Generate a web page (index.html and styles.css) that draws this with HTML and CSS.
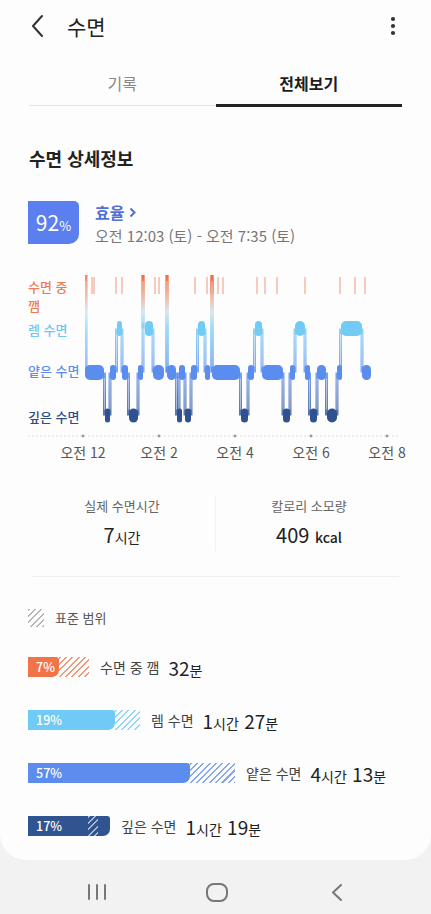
FILE: index.html
```html
<!DOCTYPE html>
<html lang="ko">
<head>
  <meta charset="UTF-8" />
  <title>수면</title>
  <meta name="viewport" content="width=device-width, initial-scale=1.0"/>
  <link rel="stylesheet" href="styles.css">
</head>
<body>
  <div class="card">
    <header class="appbar">
      <svg class="icon-back" width="13" height="24" viewBox="0 0 13 24"><polyline points="11,2 2,12 11,22" /></svg>
      <h1 class="title">수면</h1>
      <svg class="icon-more" width="6" height="20" viewBox="0 0 6 20"><circle cx="3" cy="3" r="2.1"/><circle cx="3" cy="10" r="2.1"/><circle cx="3" cy="17" r="2.1"/></svg>
    </header>

    <nav class="tabs">
      <div class="tab">기록</div>
      <div class="tab active">전체보기</div>
    </nav>

    <section class="detail">
      <h2 class="section-title">수면 상세정보</h2>

      <div class="efficiency">
        <div class="eff-badge"><span class="eff-num">92</span><span class="eff-pct">%</span></div>
        <div class="eff-info">
          <div class="eff-link">효율 <svg width="7" height="11" viewBox="0 0 7 11"><polyline points="1.5,1.5 5.5,5.5 1.5,9.5" /></svg></div>
          <div class="eff-time">오전 12:03 (토) - 오전 7:35 (토)</div>
        </div>
      </div>

      <div class="chart">
        <div class="plot">
          <div class="stage-labels">
            <span class="lbl lbl-wake">수면 중<br>깸</span>
            <span class="lbl lbl-rem">렘 수면</span>
            <span class="lbl lbl-light">얕은 수면</span>
            <span class="lbl lbl-deep">깊은 수면</span>
          </div>
          <svg id="hypnogram" class="hypno" width="318" height="160" viewBox="0 0 318 160"></svg>
        </div>
        <svg class="axis" width="395" height="32" viewBox="0 0 395 32">
          <line x1="0" y1="3" x2="372" y2="3" class="axis-line" />
          <circle cx="55" cy="3" r="1.4" class="axis-dot" />
          <circle cx="131" cy="3" r="1.4" class="axis-dot" />
          <circle cx="207" cy="3" r="1.4" class="axis-dot" />
          <circle cx="283" cy="3" r="1.4" class="axis-dot" />
          <circle cx="359" cy="3" r="1.4" class="axis-dot" />
          <text x="55" y="25" class="axis-text">오전 12</text>
          <text x="131" y="25" class="axis-text">오전 2</text>
          <text x="207" y="25" class="axis-text">오전 4</text>
          <text x="283" y="25" class="axis-text">오전 6</text>
          <text x="359" y="25" class="axis-text">오전 8</text>
        </svg>
      </div>

      <div class="summary">
        <div class="stat">
          <div class="stat-label">실제 수면시간</div>
          <div class="stat-value">7<small>시간</small></div>
        </div>
        <div class="stat">
          <div class="stat-label">칼로리 소모량</div>
          <div class="stat-value">409 <small class="kcal">kcal</small></div>
        </div>
      </div>
    </section>

    <div class="divider"></div>

    <div class="legend">
      <span class="legend-icon"></span>
      <span>표준 범위</span>
    </div>

    <ul class="stages">
      <li class="stage-row wake">
        <div class="bar" style="width:61px">
          <div class="bar-fill" style="width:31px">7%</div>
          <div class="bar-range" style="left:31px;width:30px"></div>
        </div>
        <span class="stage-label">수면 중 깸</span>
        <span class="stage-value">32<small>분</small></span>
      </li>
      <li class="stage-row rem">
        <div class="bar" style="width:112px">
          <div class="bar-fill" style="width:87px">19%</div>
          <div class="bar-range" style="left:87px;width:25px"></div>
        </div>
        <span class="stage-label">렘 수면</span>
        <span class="stage-value">1<small>시간</small> 27<small>분</small></span>
      </li>
      <li class="stage-row light">
        <div class="bar" style="width:207px">
          <div class="bar-fill" style="width:162px">57%</div>
          <div class="bar-range" style="left:162px;width:45px"></div>
        </div>
        <span class="stage-label">얕은 수면</span>
        <span class="stage-value">4<small>시간</small> 13<small>분</small></span>
      </li>
      <li class="stage-row deep">
        <div class="bar" style="width:82px">
          <div class="bar-fill" style="width:82px">17%</div>
          <div class="bar-range inside" style="left:60px;width:10px"></div>
        </div>
        <span class="stage-label">깊은 수면</span>
        <span class="stage-value">1<small>시간</small> 19<small>분</small></span>
      </li>
    </ul>
  </div>

  <div class="navbar">
    <svg width="20" height="16" viewBox="0 0 20 16"><line x1="2" y1="1" x2="2" y2="15"/><line x1="10" y1="1" x2="10" y2="15"/><line x1="18" y1="1" x2="18" y2="15"/></svg>
    <svg width="22" height="19" viewBox="0 0 22 19"><rect x="1" y="1" width="20" height="17" rx="7"/></svg>
    <svg width="12" height="19" viewBox="0 0 12 19"><polyline points="10,2 2,9.5 10,17"/></svg>
  </div>

  <script>
    const svg = document.getElementById("hypnogram");
    const NS = "http://www.w3.org/2000/svg";

    // level centres and band boxes, in svg coordinates
    const LEVEL = { w: 2, r: 55.5, l: 99.5, d: 142.5 };
    const BAND = { r: [48, 15], l: [92, 15], d: [135.5, 14] };
    const COLOR = { r: "#72cbf4", l: "#5b8def", d: "#2e5190" };

    // [stage, start x, end x]
    const stages = [
      ["w", 1, 1], ["l", 0, 19], ["d", 20, 25], ["l", 25, 31], ["r", 32, 37],
      ["l", 37, 43], ["d", 44, 53], ["l", 53, 57], ["w", 58, 58], ["r", 60, 68],
      ["l", 68, 79], ["w", 82, 82], ["l", 82, 91], ["d", 92, 94], ["l", 94, 100],
      ["d", 100, 106], ["l", 106, 112], ["r", 113, 120], ["l", 120, 124], ["w", 127, 127],
      ["l", 127, 155], ["d", 156, 163], ["l", 163, 169], ["r", 170, 177], ["l", 177, 198],
      ["d", 198, 205], ["l", 205, 210], ["r", 210, 220], ["l", 220, 224], ["d", 225, 232],
      ["l", 232, 241], ["d", 242, 252], ["l", 252, 255], ["r", 256, 277], ["l", 277, 286]
    ];
    const wakeTicks = [7, 9, 31, 37, 70, 74, 110, 122, 126, 128, 133, 138, 172, 180, 192, 220, 255, 270, 280];

    function el(name, attrs) {
      const e = document.createElementNS(NS, name);
      for (const k in attrs) e.setAttribute(k, attrs[k]);
      return e;
    }

    const defs = el("defs", {});
    const grad = el("linearGradient", { id: "stageGrad", gradientUnits: "userSpaceOnUse", x1: 0, y1: 0, x2: 0, y2: 150 });
    [[0, "#f0623a"], [0.12, "#f08a66"], [0.26, "#c4dcec"], [0.37, "#78cbf3"], [0.66, "#5b8def"], [0.95, "#2e5190"]]
      .forEach(([o, c]) => grad.appendChild(el("stop", { offset: o, "stop-color": c })));
    defs.appendChild(grad);
    svg.appendChild(defs);

    wakeTicks.forEach(x => {
      svg.appendChild(el("line", { x1: x, y1: 4, x2: x, y2: 21, class: "tick" }));
    });

    for (let i = 0; i < stages.length - 1; i++) {
      const a = stages[i], b = stages[i + 1];
      let x;
      if (b[0] === "w") x = b[1];
      else if (a[0] === "w") x = a[1];
      else x = (a[2] + b[1]) / 2;
      const y1 = Math.min(LEVEL[a[0]], LEVEL[b[0]]);
      const y2 = Math.max(LEVEL[a[0]], LEVEL[b[0]]);
      svg.appendChild(el("rect", { x: x - 1.5, y: y1, width: 3, height: y2 - y1, class: "link" }));
      svg.appendChild(el("rect", { x: x - 0.4, y: y1 + 6, width: 0.8, height: Math.max(y2 - y1 - 12, 0), class: "link-core" }));
    }

    stages.forEach(([s, x1, x2]) => {
      if (s === "w") return;
      const w = Math.max(x2 - x1, 5);
      const [y, h] = BAND[s];
      svg.appendChild(el("rect", { x: x1, y: y, width: w, height: h, rx: Math.min(5, w / 2), fill: COLOR[s] }));
    });
  </script>
</body>
</html>
```

FILE: styles.css
```css
:root {
  --wake: #f07448;
  --rem: #6fcaf5;
  --light: #5b8cee;
  --deep: #2f5490;
  --badge: #5b7fee;
  --text: #222222;
}
body {
  margin: 0;
  background: #f2f2f2;
  font-family: "Noto Sans CJK KR", "Noto Sans", sans-serif;
  color: var(--text);
}
.card {
  background: #fdfdfd;
  border-radius: 0 0 26px 26px;
  padding-bottom: 24px;
}

/* app bar */
.appbar {
  display: flex;
  align-items: center;
  height: 52px;
  padding: 0 35px 0 31px;
}
.icon-back polyline {
  fill: none;
  stroke: #333;
  stroke-width: 2;
  stroke-linecap: round;
  stroke-linejoin: round;
}
.title {
  flex: 1;
  margin: 0 0 0 23px;
  font-size: 21px;
  font-weight: 400;
  line-height: 1;
}
.icon-more circle {
  fill: #333;
}

/* tabs */
.tabs {
  display: flex;
  align-items: flex-end;
  margin: 10px 29px 0;
}
.tab {
  flex: 1;
  text-align: center;
  font-size: 16px;
  line-height: 22px;
  padding: 10px 0 11px;
  color: #888;
  border-bottom: 1px solid #e4e4e4;
  margin-bottom: 1px;
}
.tab.active {
  color: #1e1e1e;
  font-weight: 700;
  padding-bottom: 10px;
  border-bottom: 3px solid #222;
  margin-bottom: 0;
}

/* detail */
.detail {
  padding: 0 28px;
}
.section-title {
  margin: 38px 0 0 1px;
  font-size: 18px;
  line-height: 26px;
  font-weight: 700;
}
.efficiency {
  display: flex;
  margin-top: 30px;
}
.eff-badge {
  width: 51px;
  height: 43px;
  line-height: 43px;
  text-align: center;
  background: var(--badge);
  color: #fff;
  border-radius: 0 5px 10px 0;
}
.eff-num {
  font-size: 21px;
}
.eff-pct {
  font-size: 13px;
}
.eff-info {
  margin-left: 16px;
}
.eff-link {
  display: flex;
  align-items: center;
  gap: 5px;
  color: #4f70d8;
  font-size: 16px;
  font-weight: 700;
  line-height: 22px;
}
.eff-link polyline {
  fill: none;
  stroke: #4f70d8;
  stroke-width: 2;
}
.eff-time {
  margin-top: 2px;
  font-size: 15px;
  line-height: 22px;
  color: #777;
}

/* chart */
.chart {
  margin-top: 26px;
}
.plot {
  display: flex;
  height: 160px;
}
.stage-labels {
  width: 57px;
  display: flex;
  flex-direction: column;
  font-size: 13px;
  line-height: 15px;
  font-weight: 500;
}
.lbl-wake {
  margin-top: 4px;
  line-height: 19px;
  color: #ef7a55;
}
.lbl-rem {
  margin-top: 7px;
  color: #6cc6f0;
}
.lbl-light {
  margin-top: 26px;
  color: #5b8def;
}
.lbl-deep {
  margin-top: 31px;
  color: #2e4d85;
}
.hypno {
  display: block;
}
.hypno .tick {
  stroke: #f3b4a0;
  stroke-width: 1.4;
}
.hypno .link {
  fill: url(#stageGrad);
  opacity: 0.8;
}
.hypno .link-core {
  fill: #ffffff;
  opacity: 0.6;
}
.axis {
  display: block;
  margin-right: -20px;
}
.axis-line {
  stroke: #d6d6d6;
  stroke-width: 1;
  stroke-dasharray: 1.5 2.5;
}
.axis-dot {
  fill: #9a9a9a;
}
.axis-text {
  font-family: "Noto Sans CJK KR", "Noto Sans", sans-serif;
  font-size: 14px;
  fill: #555;
  text-anchor: middle;
}

/* summary */
.summary {
  display: flex;
  margin: 31px 1px 0;
}
.stat {
  flex: 1;
  text-align: center;
}
.stat + .stat {
  border-left: 1px solid #f1f1f1;
}
.stat-label {
  font-size: 13px;
  line-height: 20px;
  color: #666;
}
.stat-value {
  margin-top: 5px;
  font-size: 20px;
  line-height: 28px;
  font-weight: 400;
}
.stat-value small {
  font-size: 14px;
  font-weight: 400;
}
.stat-value .kcal {
  font-weight: 500;
}
.divider {
  height: 1px;
  background: #efefef;
  margin: 25px 32px 0;
}

/* legend */
.legend {
  display: flex;
  align-items: center;
  gap: 11px;
  margin: 31px 28px 0;
  font-size: 13px;
  line-height: 20px;
  color: #555;
}
.legend-icon {
  width: 16px;
  height: 18px;
  background: repeating-linear-gradient(135deg, #b5b5b5 0 1.5px, transparent 1.5px 4.5px);
}

/* stage bars */
.stages {
  list-style: none;
  margin: 29px 0 0;
  padding: 0 28px;
  display: flex;
  flex-direction: column;
  gap: 33px;
}
.stage-row {
  display: flex;
  align-items: center;
  height: 20px;
}
.stage-row.wake { --c: var(--wake); }
.stage-row.rem { --c: var(--rem); }
.stage-row.light { --c: var(--light); }
.stage-row.deep { --c: var(--deep); }
.bar {
  position: relative;
  height: 20px;
  margin-right: 11px;
}
.bar-fill {
  box-sizing: border-box;
  height: 100%;
  padding-left: 8px;
  background: var(--c);
  border-radius: 0 3px 7px 0;
  color: #fff;
  font-size: 12.5px;
  font-weight: 500;
  line-height: 20px;
}
.bar-range {
  position: absolute;
  top: 0;
  height: 100%;
  background: repeating-linear-gradient(135deg, var(--c) 0 1.5px, transparent 1.5px 4.5px);
  opacity: 0.75;
}
.bar-range.inside {
  background: repeating-linear-gradient(135deg, rgba(255, 255, 255, 0.6) 0 1.5px, transparent 1.5px 4.5px);
  opacity: 1;
}
.stage-label {
  font-size: 14px;
  color: #444;
}
.stage-value {
  margin-left: 9px;
  font-size: 19px;
  font-weight: 400;
  color: #222;
}
.stage-value small {
  font-size: 14px;
}

/* system nav */
.navbar {
  display: grid;
  grid-template-columns: repeat(3, 120px);
  justify-content: center;
  justify-items: center;
  align-items: center;
  height: 59px;
  padding: 5px 0 0 3px;
  box-sizing: border-box;
}
.navbar line,
.navbar rect,
.navbar polyline {
  fill: none;
  stroke: #777;
  stroke-width: 2;
  stroke-linecap: round;
  stroke-linejoin: round;
}
```
